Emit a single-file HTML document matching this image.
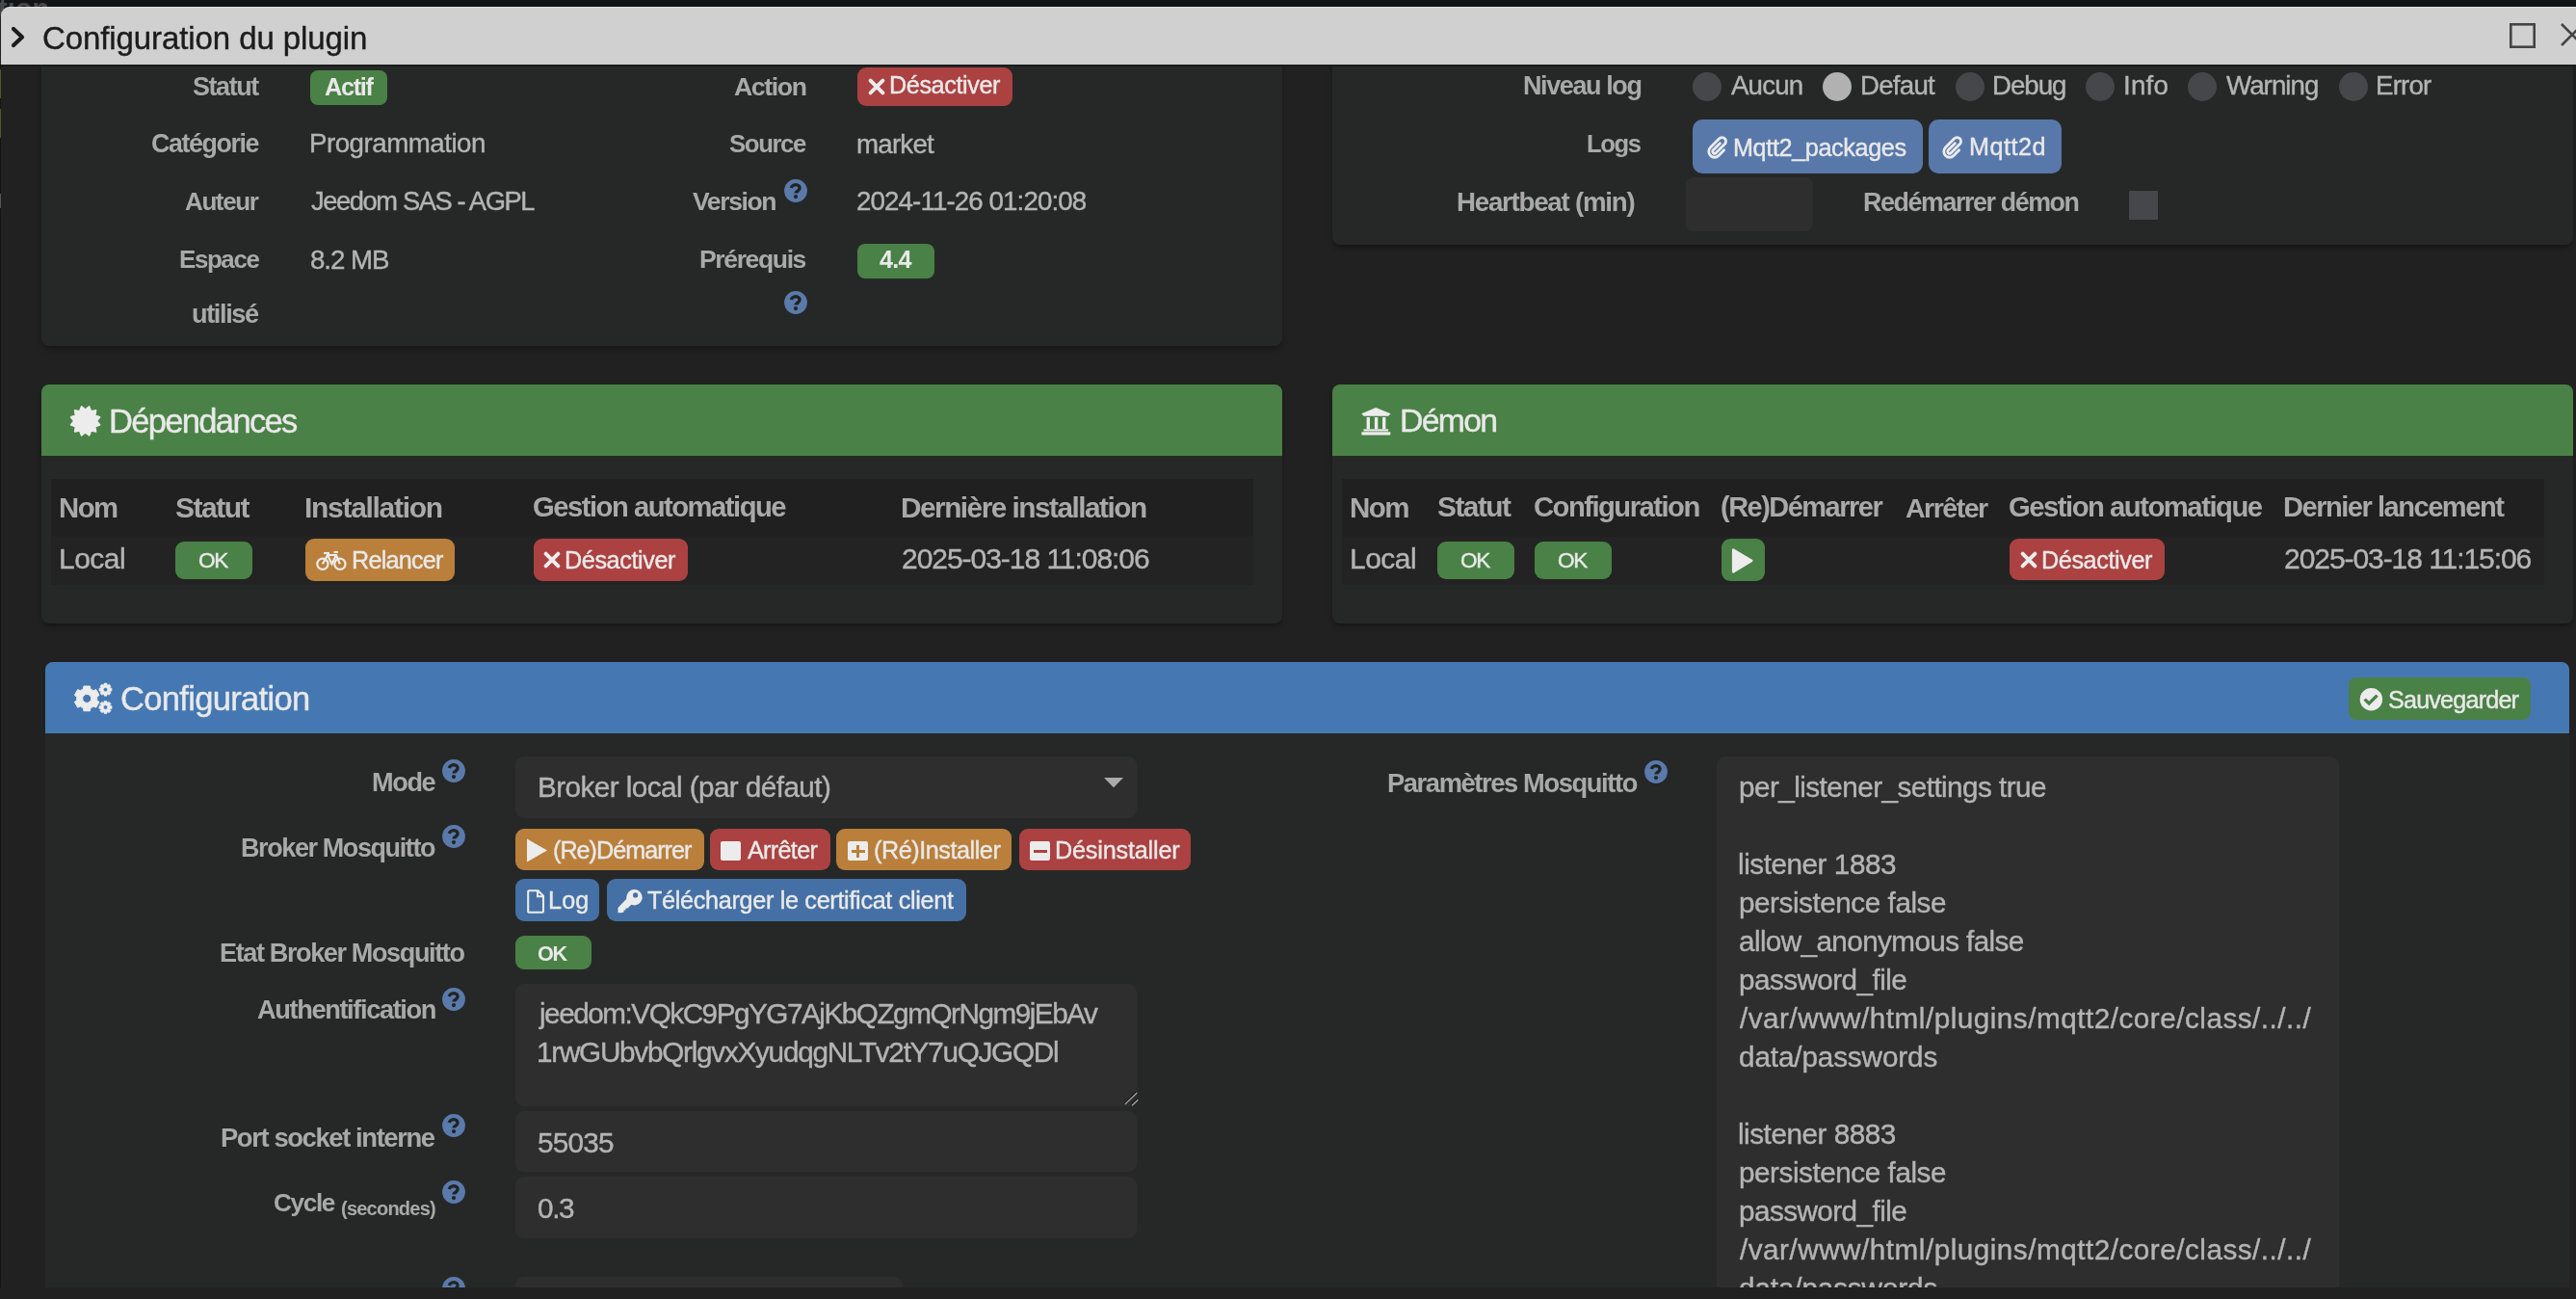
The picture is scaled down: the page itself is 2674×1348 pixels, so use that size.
<!DOCTYPE html>
<html><head><meta charset="utf-8"><style>
html,body{margin:0;padding:0;}
body{width:2674px;height:1348px;overflow:hidden;position:relative;background:#212121;font-family:"Liberation Sans", sans-serif;}
</style></head><body>
<div style="position:absolute;left:0.0px;top:0.0px;width:2674.0px;height:7.0px;background:#131416;border-radius:0px;"></div>
<div id="t0" style="position:absolute;left:-1.75px;top:-5.25px;font-size:29px;line-height:29px;font-weight:700;color:#4a4a4a;will-change:transform;white-space:pre;letter-spacing:0.000px;">tion</div>
<div style="position:absolute;left:1.0px;top:7.0px;width:2673.0px;height:1341.0px;background:#212121;border-radius:9px 0 0 0;"></div>
<div style="position:absolute;left:0.0px;top:67.0px;width:1.0px;height:1281.0px;background:#151515;border-radius:0px;"></div>
<div style="position:absolute;left:0.0px;top:71.5px;width:1.0px;height:30.1px;background:#4d5a22;border-radius:0px;"></div>
<div style="position:absolute;left:0.0px;top:113.0px;width:1.0px;height:30.0px;background:#4d5a22;border-radius:0px;"></div>
<div style="position:absolute;left:0.0px;top:201.0px;width:1.0px;height:15.0px;background:#555;border-radius:0px;"></div>
<div style="position:absolute;left:43.0px;top:40.0px;width:1288.0px;height:318.5px;background:#262827;border-radius:0 0 8px 8px;box-shadow:0 4px 6px -2px rgba(0,0,0,.45);"></div>
<div style="position:absolute;left:1383.0px;top:40.0px;width:1288.0px;height:213.6px;background:#262827;border-radius:0 0 8px 8px;box-shadow:0 4px 6px -2px rgba(0,0,0,.45);"></div>
<div style="position:absolute;left:1.0px;top:7.0px;width:2673.0px;height:60.0px;background:#d0d0d0;border-radius:9px 0 0 0;border-top:1px solid #e0e0e0;box-sizing:border-box;"></div>
<div style="position:absolute;left:1.0px;top:67.0px;width:2673.0px;height:2.0px;background:#1b1c1c;border-radius:0px;"></div>
<svg style="position:absolute;left:10.0px;top:26.0px;" width="18" height="26" viewBox="0 0 18 26"><polyline points="4,4 13,12.5 4,21" fill="none" stroke="#1c1c1c" stroke-width="4.2" stroke-linecap="round" stroke-linejoin="round"/></svg>
<div id="t1" style="position:absolute;left:44.00px;top:23.06px;font-size:33px;line-height:33px;font-weight:400;color:#1c1c1c;-webkit-text-stroke:0.4px currentColor;will-change:transform;white-space:pre;letter-spacing:-0.094px;">Configuration du plugin</div>
<svg style="position:absolute;left:2604.0px;top:23.0px;" width="30" height="28" viewBox="0 0 30 28"><rect x="2.3" y="2.3" width="24.4" height="23.4" fill="none" stroke="#444" stroke-width="2.6"/></svg>
<svg style="position:absolute;left:2655.0px;top:22.0px;" width="22" height="30" viewBox="0 0 22 30"><path d="M4,3 L26,25 M4,25 L26,3" stroke="#444" stroke-width="2.6" fill="none"/></svg>
<div id="t2" style="position:absolute;left:200.00px;top:76.53px;font-size:26.89px;line-height:26.89px;font-weight:700;color:#a9a9a9;will-change:transform;white-space:pre;letter-spacing:-1.385px;">Statut</div>
<div id="t3" style="position:absolute;left:157.03px;top:136.33px;font-size:26.77px;line-height:26.77px;font-weight:700;color:#a9a9a9;will-change:transform;white-space:pre;letter-spacing:-1.385px;">Catégorie</div>
<div id="t4" style="position:absolute;left:192.00px;top:196.39px;font-size:25.99px;line-height:25.99px;font-weight:700;color:#a9a9a9;will-change:transform;white-space:pre;letter-spacing:-1.385px;">Auteur</div>
<div id="t5" style="position:absolute;left:185.56px;top:257.05px;font-size:25.92px;line-height:25.92px;font-weight:700;color:#a9a9a9;will-change:transform;white-space:pre;letter-spacing:-1.385px;">Espace</div>
<div id="t6" style="position:absolute;left:199.32px;top:311.62px;font-size:27.14px;line-height:27.14px;font-weight:700;color:#a9a9a9;will-change:transform;white-space:pre;letter-spacing:-1.385px;">utilisé</div>
<div style="position:absolute;left:322.0px;top:73.0px;width:79.7px;height:35.6px;background:#4a8146;border-radius:8px;"></div>
<div id="t7" style="position:absolute;left:336.50px;top:77.90px;font-size:25.28px;line-height:25.28px;font-weight:700;color:#e9e9e9;will-change:transform;white-space:pre;letter-spacing:-1.300px;">Actif</div>
<div id="t8" style="position:absolute;left:321.40px;top:135.45px;font-size:27.7px;line-height:27.7px;font-weight:400;color:#b4b4b4;-webkit-text-stroke:0.4px currentColor;will-change:transform;white-space:pre;letter-spacing:-0.489px;">Programmation</div>
<div id="t9" style="position:absolute;left:323.00px;top:195.31px;font-size:27.27px;line-height:27.27px;font-weight:400;color:#b4b4b4;-webkit-text-stroke:0.4px currentColor;will-change:transform;white-space:pre;letter-spacing:-1.385px;">Jeedom SAS - AGPL</div>
<div id="t10" style="position:absolute;left:321.60px;top:255.55px;font-size:27.7px;line-height:27.7px;font-weight:400;color:#b4b4b4;-webkit-text-stroke:0.4px currentColor;will-change:transform;white-space:pre;letter-spacing:-1.049px;">8.2 MB</div>
<div id="t11" style="position:absolute;left:762.00px;top:76.75px;font-size:26.63px;line-height:26.63px;font-weight:700;color:#a9a9a9;will-change:transform;white-space:pre;letter-spacing:-1.385px;">Action</div>
<div id="t12" style="position:absolute;left:757.00px;top:137.19px;font-size:25.76px;line-height:25.76px;font-weight:700;color:#a9a9a9;will-change:transform;white-space:pre;letter-spacing:-1.385px;">Source</div>
<div id="t13" style="position:absolute;left:719.40px;top:196.25px;font-size:26.52px;line-height:26.52px;font-weight:700;color:#a9a9a9;will-change:transform;white-space:pre;letter-spacing:-1.385px;">Version</div>
<div id="t14" style="position:absolute;left:726.04px;top:255.82px;font-size:26.55px;line-height:26.55px;font-weight:700;color:#a9a9a9;will-change:transform;white-space:pre;letter-spacing:-1.385px;">Prérequis</div>
<svg style="position:absolute;left:814.0px;top:186.0px;" width="24" height="24" viewBox="0 0 24 24"><circle cx="12" cy="12" r="11.9" fill="#5a7aab"/><path d="M7.2,9.1 C8.3,5.7 12,5.3 13.7,6 C16.7,7.2 16.8,10.4 14.3,12 C12.6,13.1 12,13.4 12,14.6" fill="none" stroke="#222423" stroke-width="3.4" stroke-linecap="butt"/><circle cx="12" cy="18.1" r="2.1" fill="#222423"/></svg>
<svg style="position:absolute;left:814.0px;top:302.0px;" width="24" height="24" viewBox="0 0 24 24"><circle cx="12" cy="12" r="11.9" fill="#5a7aab"/><path d="M7.2,9.1 C8.3,5.7 12,5.3 13.7,6 C16.7,7.2 16.8,10.4 14.3,12 C12.6,13.1 12,13.4 12,14.6" fill="none" stroke="#222423" stroke-width="3.4" stroke-linecap="butt"/><circle cx="12" cy="18.1" r="2.1" fill="#222423"/></svg>
<div style="position:absolute;left:889.7px;top:70.0px;width:161.0px;height:39.5px;background:#ab4141;border-radius:9px;"></div>
<div id="t15" style="position:absolute;left:923.20px;top:76.46px;font-size:25.2px;line-height:25.2px;font-weight:400;color:#e9e9e9;-webkit-text-stroke:0.4px currentColor;will-change:transform;white-space:pre;letter-spacing:-0.399px;">Désactiver</div>
<div id="t16" style="position:absolute;left:889.20px;top:135.55px;font-size:27.7px;line-height:27.7px;font-weight:400;color:#b4b4b4;-webkit-text-stroke:0.4px currentColor;will-change:transform;white-space:pre;letter-spacing:-0.785px;">market</div>
<div id="t17" style="position:absolute;left:888.70px;top:195.25px;font-size:27.7px;line-height:27.7px;font-weight:400;color:#b4b4b4;-webkit-text-stroke:0.4px currentColor;will-change:transform;white-space:pre;letter-spacing:-0.880px;">2024-11-26 01:20:08</div>
<div style="position:absolute;left:890.0px;top:253.0px;width:79.7px;height:35.5px;background:#4a8146;border-radius:8px;"></div>
<div id="t18" style="position:absolute;left:913.00px;top:256.96px;font-size:25.2px;line-height:25.2px;font-weight:700;color:#e9e9e9;will-change:transform;white-space:pre;letter-spacing:-0.803px;">4.4</div>
<div id="t19" style="position:absolute;left:1581.23px;top:75.86px;font-size:26.97px;line-height:26.97px;font-weight:700;color:#a9a9a9;will-change:transform;white-space:pre;letter-spacing:-1.385px;">Niveau log</div>
<div id="t20" style="position:absolute;left:1647.48px;top:137.35px;font-size:25.57px;line-height:25.57px;font-weight:700;color:#a9a9a9;will-change:transform;white-space:pre;letter-spacing:-1.385px;">Logs</div>
<div id="t21" style="position:absolute;left:1511.60px;top:196.05px;font-size:27.7px;line-height:27.7px;font-weight:700;color:#a9a9a9;will-change:transform;white-space:pre;letter-spacing:-1.247px;">Heartbeat (min)</div>
<div style="position:absolute;left:1757.0px;top:75.0px;width:30.0px;height:30.0px;background:#46474a;border-radius:15px;"></div>
<div id="t22" style="position:absolute;left:1797.00px;top:75.25px;font-size:27.7px;line-height:27.7px;font-weight:400;color:#b4b4b4;-webkit-text-stroke:0.4px currentColor;will-change:transform;white-space:pre;letter-spacing:-0.852px;">Aucun</div>
<div style="position:absolute;left:1892.0px;top:75.0px;width:30.0px;height:30.0px;background:#b1b1b1;border-radius:15px;"></div>
<div id="t23" style="position:absolute;left:1930.50px;top:75.25px;font-size:27.7px;line-height:27.7px;font-weight:400;color:#b4b4b4;-webkit-text-stroke:0.4px currentColor;will-change:transform;white-space:pre;letter-spacing:-0.777px;">Defaut</div>
<div style="position:absolute;left:2030.0px;top:75.0px;width:30.0px;height:30.0px;background:#46474a;border-radius:15px;"></div>
<div id="t24" style="position:absolute;left:2068.00px;top:75.25px;font-size:27.7px;line-height:27.7px;font-weight:400;color:#b4b4b4;-webkit-text-stroke:0.4px currentColor;will-change:transform;white-space:pre;letter-spacing:-1.048px;">Debug</div>
<div style="position:absolute;left:2165.0px;top:75.0px;width:30.0px;height:30.0px;background:#46474a;border-radius:15px;"></div>
<div id="t25" style="position:absolute;left:2204.00px;top:75.25px;font-size:27.7px;line-height:27.7px;font-weight:400;color:#b4b4b4;-webkit-text-stroke:0.4px currentColor;will-change:transform;white-space:pre;letter-spacing:0.206px;">Info</div>
<div style="position:absolute;left:2271.0px;top:75.0px;width:30.0px;height:30.0px;background:#46474a;border-radius:15px;"></div>
<div id="t26" style="position:absolute;left:2311.00px;top:75.25px;font-size:27.7px;line-height:27.7px;font-weight:400;color:#b4b4b4;-webkit-text-stroke:0.4px currentColor;will-change:transform;white-space:pre;letter-spacing:-0.945px;">Warning</div>
<div style="position:absolute;left:2428.0px;top:75.0px;width:30.0px;height:30.0px;background:#46474a;border-radius:15px;"></div>
<div id="t27" style="position:absolute;left:2466.00px;top:75.25px;font-size:27.7px;line-height:27.7px;font-weight:400;color:#b4b4b4;-webkit-text-stroke:0.4px currentColor;will-change:transform;white-space:pre;letter-spacing:-0.827px;">Error</div>
<div style="position:absolute;left:1757.0px;top:124.0px;width:239.0px;height:56.0px;background:#5878aa;border-radius:10px;"></div>
<div style="position:absolute;left:2002.0px;top:124.0px;width:138.0px;height:56.0px;background:#5878aa;border-radius:10px;"></div>
<div id="t28" style="position:absolute;left:1798.90px;top:140.56px;font-size:25.2px;line-height:25.2px;font-weight:400;color:#e9e9e9;-webkit-text-stroke:0.4px currentColor;will-change:transform;white-space:pre;letter-spacing:-0.364px;">Mqtt2_packages</div>
<div id="t29" style="position:absolute;left:2043.80px;top:140.16px;font-size:25.2px;line-height:25.2px;font-weight:400;color:#e9e9e9;-webkit-text-stroke:0.4px currentColor;will-change:transform;white-space:pre;letter-spacing:0.521px;">Mqtt2d</div>
<div style="position:absolute;left:1750.0px;top:183.7px;width:131.5px;height:55.9px;background:#2e2e2e;border-radius:8px;"></div>
<div id="t30" style="position:absolute;left:1933.83px;top:196.81px;font-size:26.8px;line-height:26.8px;font-weight:700;color:#a9a9a9;will-change:transform;white-space:pre;letter-spacing:-1.385px;">Redémarrer démon</div>
<div style="position:absolute;left:2210.0px;top:198.0px;width:30.0px;height:29.7px;background:#46474a;border-radius:1px;"></div>
<div style="position:absolute;left:43.0px;top:399.0px;width:1287.6px;height:247.8px;background:#262827;border-radius:8px;box-shadow:0 4px 6px -2px rgba(0,0,0,.45);"></div>
<div style="position:absolute;left:43.0px;top:399.0px;width:1287.6px;height:74.0px;background:#4a8146;border-radius:8px 8px 0 0;"></div>
<div id="t31" style="position:absolute;left:112.50px;top:419.69px;font-size:34.5px;line-height:34.5px;font-weight:400;color:#e9e9e9;-webkit-text-stroke:0.4px currentColor;will-change:transform;white-space:pre;letter-spacing:-1.666px;">Dépendances</div>
<div style="position:absolute;left:53.0px;top:497.0px;width:1247.7px;height:109.5px;background:#202020;border-radius:0px;"></div>
<div style="position:absolute;left:53.0px;top:557.0px;width:1247.7px;height:49.5px;background:#232323;border-radius:0px;"></div>
<div id="t32" style="position:absolute;left:61.05px;top:512.20px;font-size:29.29px;line-height:29.29px;font-weight:700;color:#a9a9a9;will-change:transform;white-space:pre;letter-spacing:-1.500px;">Nom</div>
<div id="t33" style="position:absolute;left:182.00px;top:511.60px;font-size:30px;line-height:30px;font-weight:700;color:#a9a9a9;will-change:transform;white-space:pre;letter-spacing:-1.500px;">Statut</div>
<div id="t34" style="position:absolute;left:316.00px;top:511.60px;font-size:30px;line-height:30px;font-weight:700;color:#a9a9a9;will-change:transform;white-space:pre;letter-spacing:-1.302px;">Installation</div>
<div id="t35" style="position:absolute;left:553.33px;top:512.26px;font-size:29.22px;line-height:29.22px;font-weight:700;color:#a9a9a9;will-change:transform;white-space:pre;letter-spacing:-1.500px;">Gestion automatique</div>
<div id="t36" style="position:absolute;left:934.81px;top:511.79px;font-size:29.78px;line-height:29.78px;font-weight:700;color:#a9a9a9;will-change:transform;white-space:pre;letter-spacing:-1.500px;">Dernière installation</div>
<div id="t37" style="position:absolute;left:61.00px;top:565.10px;font-size:30px;line-height:30px;font-weight:400;color:#b4b4b4;-webkit-text-stroke:0.4px currentColor;will-change:transform;white-space:pre;letter-spacing:-0.513px;">Local</div>
<div style="position:absolute;left:182.0px;top:561.5px;width:79.7px;height:39.5px;background:#4a8146;border-radius:9px;"></div>
<div id="t38" style="position:absolute;left:205.54px;top:571.40px;font-size:22.56px;line-height:22.56px;font-weight:400;color:#e9e9e9;-webkit-text-stroke:0.4px currentColor;will-change:transform;white-space:pre;letter-spacing:-1.180px;">OK</div>
<div style="position:absolute;left:317.0px;top:559.3px;width:155.0px;height:43.5px;background:#b97f3b;border-radius:9px;"></div>
<div id="t39" style="position:absolute;left:364.90px;top:569.46px;font-size:25.2px;line-height:25.2px;font-weight:400;color:#e9e9e9;-webkit-text-stroke:0.4px currentColor;will-change:transform;white-space:pre;letter-spacing:-0.773px;">Relancer</div>
<div style="position:absolute;left:553.8px;top:559.3px;width:160.2px;height:43.5px;background:#ab4141;border-radius:9px;"></div>
<div id="t40" style="position:absolute;left:586.00px;top:569.46px;font-size:25.2px;line-height:25.2px;font-weight:400;color:#e9e9e9;-webkit-text-stroke:0.4px currentColor;will-change:transform;white-space:pre;letter-spacing:-0.399px;">Désactiver</div>
<div id="t41" style="position:absolute;left:935.80px;top:564.60px;font-size:30px;line-height:30px;font-weight:400;color:#b4b4b4;-webkit-text-stroke:0.4px currentColor;will-change:transform;white-space:pre;letter-spacing:-1.037px;">2025-03-18 11:08:06</div>
<div style="position:absolute;left:1383.0px;top:399.0px;width:1288.0px;height:247.8px;background:#262827;border-radius:8px;box-shadow:0 4px 6px -2px rgba(0,0,0,.45);"></div>
<div style="position:absolute;left:1383.0px;top:399.0px;width:1288.0px;height:74.0px;background:#4a8146;border-radius:8px 8px 0 0;"></div>
<div id="t42" style="position:absolute;left:1453.04px;top:420.17px;font-size:33.81px;line-height:33.81px;font-weight:400;color:#e9e9e9;-webkit-text-stroke:0.4px currentColor;will-change:transform;white-space:pre;letter-spacing:-1.725px;">Démon</div>
<div style="position:absolute;left:1393.0px;top:497.0px;width:1248.0px;height:109.5px;background:#202020;border-radius:0px;"></div>
<div style="position:absolute;left:1393.0px;top:557.0px;width:1248.0px;height:49.5px;background:#232323;border-radius:0px;"></div>
<div id="t43" style="position:absolute;left:1401.03px;top:511.70px;font-size:29.53px;line-height:29.53px;font-weight:700;color:#a9a9a9;will-change:transform;white-space:pre;letter-spacing:-1.500px;">Nom</div>
<div id="t44" style="position:absolute;left:1492.40px;top:511.45px;font-size:29.82px;line-height:29.82px;font-weight:700;color:#a9a9a9;will-change:transform;white-space:pre;letter-spacing:-1.500px;">Statut</div>
<div id="t45" style="position:absolute;left:1592.03px;top:511.99px;font-size:29.18px;line-height:29.18px;font-weight:700;color:#a9a9a9;will-change:transform;white-space:pre;letter-spacing:-1.500px;">Configuration</div>
<div id="t46" style="position:absolute;left:1786.03px;top:512.17px;font-size:28.97px;line-height:28.97px;font-weight:700;color:#a9a9a9;will-change:transform;white-space:pre;letter-spacing:-1.500px;">(Re)Démarrer</div>
<div id="t47" style="position:absolute;left:1977.80px;top:512.54px;font-size:28.54px;line-height:28.54px;font-weight:700;color:#a9a9a9;will-change:transform;white-space:pre;letter-spacing:-1.500px;">Arrêter</div>
<div id="t48" style="position:absolute;left:2084.92px;top:511.92px;font-size:29.27px;line-height:29.27px;font-weight:700;color:#a9a9a9;will-change:transform;white-space:pre;letter-spacing:-1.500px;">Gestion automatique</div>
<div id="t49" style="position:absolute;left:2370.26px;top:512.06px;font-size:29.1px;line-height:29.1px;font-weight:700;color:#a9a9a9;will-change:transform;white-space:pre;letter-spacing:-1.500px;">Dernier lancement</div>
<div id="t50" style="position:absolute;left:1401.00px;top:565.10px;font-size:30px;line-height:30px;font-weight:400;color:#b4b4b4;-webkit-text-stroke:0.4px currentColor;will-change:transform;white-space:pre;letter-spacing:-0.513px;">Local</div>
<div style="position:absolute;left:1492.0px;top:561.5px;width:80.0px;height:39.5px;background:#4a8146;border-radius:9px;"></div>
<div id="t51" style="position:absolute;left:1515.54px;top:571.40px;font-size:22.56px;line-height:22.56px;font-weight:400;color:#e9e9e9;-webkit-text-stroke:0.4px currentColor;will-change:transform;white-space:pre;letter-spacing:-1.180px;">OK</div>
<div style="position:absolute;left:1593.0px;top:561.5px;width:80.0px;height:39.5px;background:#4a8146;border-radius:9px;"></div>
<div id="t52" style="position:absolute;left:1616.54px;top:571.40px;font-size:22.56px;line-height:22.56px;font-weight:400;color:#e9e9e9;-webkit-text-stroke:0.4px currentColor;will-change:transform;white-space:pre;letter-spacing:-1.180px;">OK</div>
<div style="position:absolute;left:1787.0px;top:559.0px;width:45.0px;height:44.0px;background:#4a8146;border-radius:9px;"></div>
<div style="position:absolute;left:2086.0px;top:559.0px;width:160.7px;height:43.4px;background:#ab4141;border-radius:9px;"></div>
<div id="t53" style="position:absolute;left:2118.70px;top:569.46px;font-size:25.2px;line-height:25.2px;font-weight:400;color:#e9e9e9;-webkit-text-stroke:0.4px currentColor;will-change:transform;white-space:pre;letter-spacing:-0.399px;">Désactiver</div>
<div id="t54" style="position:absolute;left:2371.20px;top:564.60px;font-size:30px;line-height:30px;font-weight:400;color:#b4b4b4;-webkit-text-stroke:0.4px currentColor;will-change:transform;white-space:pre;letter-spacing:-1.059px;">2025-03-18 11:15:06</div>
<div style="position:absolute;left:47.0px;top:687.0px;width:2620.0px;height:649.0px;background:#262827;border-radius:8px 8px 0 0;"></div>
<div style="position:absolute;left:47.0px;top:687.0px;width:2620.0px;height:73.5px;background:#4578b2;border-radius:8px 8px 0 0;"></div>
<div id="t55" style="position:absolute;left:125.00px;top:708.09px;font-size:34.5px;line-height:34.5px;font-weight:400;color:#e9e9e9;-webkit-text-stroke:0.4px currentColor;will-change:transform;white-space:pre;letter-spacing:-0.669px;">Configuration</div>
<div style="position:absolute;left:2437.9px;top:703.0px;width:189.1px;height:43.9px;background:#4a8146;border-radius:8px;"></div>
<div id="t56" style="position:absolute;left:2479.00px;top:713.66px;font-size:25.2px;line-height:25.2px;font-weight:400;color:#e9e9e9;-webkit-text-stroke:0.4px currentColor;will-change:transform;white-space:pre;letter-spacing:-0.824px;">Sauvegarder</div>
<div id="t57" style="position:absolute;left:385.72px;top:798.02px;font-size:27.14px;line-height:27.14px;font-weight:700;color:#a9a9a9;will-change:transform;white-space:pre;letter-spacing:-1.385px;">Mode</div>
<svg style="position:absolute;left:459.0px;top:788.0px;" width="24" height="24" viewBox="0 0 24 24"><circle cx="12" cy="12" r="11.9" fill="#5a7aab"/><path d="M7.2,9.1 C8.3,5.7 12,5.3 13.7,6 C16.7,7.2 16.8,10.4 14.3,12 C12.6,13.1 12,13.4 12,14.6" fill="none" stroke="#222423" stroke-width="3.4" stroke-linecap="butt"/><circle cx="12" cy="18.1" r="2.1" fill="#222423"/></svg>
<div id="t58" style="position:absolute;left:250.43px;top:866.76px;font-size:26.98px;line-height:26.98px;font-weight:700;color:#a9a9a9;will-change:transform;white-space:pre;letter-spacing:-1.385px;">Broker Mosquitto</div>
<svg style="position:absolute;left:459.0px;top:856.0px;" width="24" height="24" viewBox="0 0 24 24"><circle cx="12" cy="12" r="11.9" fill="#5a7aab"/><path d="M7.2,9.1 C8.3,5.7 12,5.3 13.7,6 C16.7,7.2 16.8,10.4 14.3,12 C12.6,13.1 12,13.4 12,14.6" fill="none" stroke="#222423" stroke-width="3.4" stroke-linecap="butt"/><circle cx="12" cy="18.1" r="2.1" fill="#222423"/></svg>
<div id="t59" style="position:absolute;left:266.60px;top:1034.25px;font-size:27.22px;line-height:27.22px;font-weight:700;color:#a9a9a9;will-change:transform;white-space:pre;letter-spacing:-1.385px;">Authentification</div>
<svg style="position:absolute;left:459.0px;top:1025.0px;" width="24" height="24" viewBox="0 0 24 24"><circle cx="12" cy="12" r="11.9" fill="#5a7aab"/><path d="M7.2,9.1 C8.3,5.7 12,5.3 13.7,6 C16.7,7.2 16.8,10.4 14.3,12 C12.6,13.1 12,13.4 12,14.6" fill="none" stroke="#222423" stroke-width="3.4" stroke-linecap="butt"/><circle cx="12" cy="18.1" r="2.1" fill="#222423"/></svg>
<div id="t60" style="position:absolute;left:229.31px;top:1166.51px;font-size:27.39px;line-height:27.39px;font-weight:700;color:#a9a9a9;will-change:transform;white-space:pre;letter-spacing:-1.385px;">Port socket interne</div>
<svg style="position:absolute;left:459.0px;top:1156.4px;" width="24" height="24" viewBox="0 0 24 24"><circle cx="12" cy="12" r="11.9" fill="#5a7aab"/><path d="M7.2,9.1 C8.3,5.7 12,5.3 13.7,6 C16.7,7.2 16.8,10.4 14.3,12 C12.6,13.1 12,13.4 12,14.6" fill="none" stroke="#222423" stroke-width="3.4" stroke-linecap="butt"/><circle cx="12" cy="18.1" r="2.1" fill="#222423"/></svg>
<div id="t61" style="position:absolute;left:228.02px;top:974.68px;font-size:27.07px;line-height:27.07px;font-weight:700;color:#a9a9a9;will-change:transform;white-space:pre;letter-spacing:-1.385px;">Etat Broker Mosquitto</div>
<div id="t62" style="position:absolute;left:283.55px;top:1235.42px;font-size:26.19px;line-height:26.19px;font-weight:700;color:#a9a9a9;will-change:transform;white-space:pre;letter-spacing:-1.385px;">Cycle</div>
<div id="t63" style="position:absolute;left:354.00px;top:1244.07px;font-size:20px;line-height:20px;font-weight:700;color:#a9a9a9;will-change:transform;white-space:pre;letter-spacing:-0.770px;">(secondes)</div>
<svg style="position:absolute;left:459.0px;top:1224.7px;" width="24" height="24" viewBox="0 0 24 24"><circle cx="12" cy="12" r="11.9" fill="#5a7aab"/><path d="M7.2,9.1 C8.3,5.7 12,5.3 13.7,6 C16.7,7.2 16.8,10.4 14.3,12 C12.6,13.1 12,13.4 12,14.6" fill="none" stroke="#222423" stroke-width="3.4" stroke-linecap="butt"/><circle cx="12" cy="18.1" r="2.1" fill="#222423"/></svg>
<svg style="position:absolute;left:459.0px;top:1325.0px;" width="24" height="24" viewBox="0 0 24 24"><circle cx="12" cy="12" r="11.9" fill="#5a7aab"/><path d="M7.2,9.1 C8.3,5.7 12,5.3 13.7,6 C16.7,7.2 16.8,10.4 14.3,12 C12.6,13.1 12,13.4 12,14.6" fill="none" stroke="#222423" stroke-width="3.4" stroke-linecap="butt"/><circle cx="12" cy="18.1" r="2.1" fill="#222423"/></svg>
<div style="position:absolute;left:535.0px;top:784.7px;width:645.0px;height:64.1px;background:#2e2e2e;border-radius:9px;"></div>
<div id="t64" style="position:absolute;left:557.70px;top:802.35px;font-size:29.7px;line-height:29.7px;font-weight:400;color:#b4b4b4;-webkit-text-stroke:0.4px currentColor;will-change:transform;white-space:pre;letter-spacing:-0.566px;">Broker local (par défaut)</div>
<svg style="position:absolute;left:1146.0px;top:807.0px;" width="20" height="11" viewBox="0 0 20 11"><polygon points="0,0 20,0 10,10.3" fill="#aaa"/></svg>
<div style="position:absolute;left:535.0px;top:860.4px;width:195.6px;height:43.1px;background:#b97f3b;border-radius:9px;"></div>
<div id="t65" style="position:absolute;left:573.80px;top:869.66px;font-size:25.2px;line-height:25.2px;font-weight:400;color:#e9e9e9;-webkit-text-stroke:0.4px currentColor;will-change:transform;white-space:pre;letter-spacing:-0.995px;">(Re)Démarrer</div>
<div style="position:absolute;left:737.0px;top:860.4px;width:124.6px;height:43.1px;background:#ab4141;border-radius:9px;"></div>
<div id="t66" style="position:absolute;left:776.00px;top:869.66px;font-size:25.2px;line-height:25.2px;font-weight:400;color:#e9e9e9;-webkit-text-stroke:0.4px currentColor;will-change:transform;white-space:pre;letter-spacing:-0.682px;">Arrêter</div>
<div style="position:absolute;left:868.0px;top:860.4px;width:182.0px;height:43.1px;background:#b97f3b;border-radius:9px;"></div>
<div id="t67" style="position:absolute;left:906.60px;top:869.66px;font-size:25.2px;line-height:25.2px;font-weight:400;color:#e9e9e9;-webkit-text-stroke:0.4px currentColor;will-change:transform;white-space:pre;letter-spacing:-0.448px;">(Ré)Installer</div>
<div style="position:absolute;left:1058.0px;top:860.4px;width:177.7px;height:43.1px;background:#ab4141;border-radius:9px;"></div>
<div id="t68" style="position:absolute;left:1094.80px;top:869.66px;font-size:25.2px;line-height:25.2px;font-weight:400;color:#e9e9e9;-webkit-text-stroke:0.4px currentColor;will-change:transform;white-space:pre;letter-spacing:-0.181px;">Désinstaller</div>
<svg style="position:absolute;left:546.0px;top:870.0px;" width="24" height="26" viewBox="0 0 24 26"><polygon points="1,0.5 22,12.5 1,24.5" fill="#ececec"/></svg>
<div style="position:absolute;left:748.3px;top:873.0px;width:21.0px;height:20.3px;background:#ececec;border-radius:2px;"></div>
<div style="position:absolute;left:880.0px;top:873.0px;width:21.0px;height:20.3px;background:#ececec;border-radius:2px;"></div>
<div style="position:absolute;left:1069.0px;top:873.0px;width:21.4px;height:20.3px;background:#ececec;border-radius:2px;"></div>
<div style="position:absolute;left:889.0px;top:876.5px;width:3.0px;height:13.3px;background:#b97f3b;border-radius:0px;"></div>
<div style="position:absolute;left:883.5px;top:881.6px;width:14.0px;height:3.0px;background:#b97f3b;border-radius:0px;"></div>
<div style="position:absolute;left:1072.5px;top:881.6px;width:14.4px;height:3.0px;background:#ab4141;border-radius:0px;"></div>
<div style="position:absolute;left:535.0px;top:912.0px;width:87.3px;height:43.6px;background:#4470a5;border-radius:9px;"></div>
<div id="t69" style="position:absolute;left:569.30px;top:922.06px;font-size:25.2px;line-height:25.2px;font-weight:400;color:#e9e9e9;-webkit-text-stroke:0.4px currentColor;will-change:transform;white-space:pre;letter-spacing:0.142px;">Log</div>
<div style="position:absolute;left:630.0px;top:912.0px;width:372.8px;height:43.6px;background:#4470a5;border-radius:9px;"></div>
<div id="t70" style="position:absolute;left:671.80px;top:922.06px;font-size:25.2px;line-height:25.2px;font-weight:400;color:#e9e9e9;-webkit-text-stroke:0.4px currentColor;will-change:transform;white-space:pre;letter-spacing:-0.309px;">Télécharger le certificat client</div>
<div style="position:absolute;left:535.0px;top:970.7px;width:79.4px;height:35.3px;background:#4a8146;border-radius:9px;"></div>
<div id="t71" style="position:absolute;left:558.15px;top:979.26px;font-size:21.66px;line-height:21.66px;font-weight:700;color:#e9e9e9;will-change:transform;white-space:pre;letter-spacing:-1.280px;">OK</div>
<div style="position:absolute;left:535.0px;top:1021.0px;width:645.0px;height:127.0px;background:#2e2e2e;border-radius:9px;"></div>
<div id="t72" style="position:absolute;left:560.00px;top:1037.35px;font-size:29.7px;line-height:29.7px;font-weight:400;color:#b4b4b4;-webkit-text-stroke:0.4px currentColor;will-change:transform;white-space:pre;letter-spacing:-1.472px;">jeedom:VQkC9PgYG7AjKbQZgmQrNgm9jEbAv</div>
<div id="t73" style="position:absolute;left:557.00px;top:1076.85px;font-size:29.7px;line-height:29.7px;font-weight:400;color:#b4b4b4;-webkit-text-stroke:0.4px currentColor;will-change:transform;white-space:pre;letter-spacing:-1.252px;">1rwGUbvbQrlgvxXyudqgNLTv2tY7uQJGQDl</div>
<div style="position:absolute;left:535.0px;top:1153.0px;width:645.0px;height:63.0px;background:#2e2e2e;border-radius:9px;"></div>
<div id="t74" style="position:absolute;left:558.00px;top:1170.55px;font-size:29.7px;line-height:29.7px;font-weight:400;color:#b4b4b4;-webkit-text-stroke:0.4px currentColor;will-change:transform;white-space:pre;letter-spacing:-0.761px;">55035</div>
<div style="position:absolute;left:535.0px;top:1221.0px;width:645.0px;height:63.5px;background:#2e2e2e;border-radius:9px;"></div>
<div id="t75" style="position:absolute;left:558.00px;top:1238.85px;font-size:29.7px;line-height:29.7px;font-weight:400;color:#b4b4b4;-webkit-text-stroke:0.4px currentColor;will-change:transform;white-space:pre;letter-spacing:-1.379px;">0.3</div>
<div style="position:absolute;left:535.0px;top:1325.0px;width:402.0px;height:35.0px;background:#2e2e2e;border-radius:9px;"></div>
<div id="t76" style="position:absolute;left:1439.61px;top:798.89px;font-size:27.3px;line-height:27.3px;font-weight:700;color:#a9a9a9;will-change:transform;white-space:pre;letter-spacing:-1.385px;">Paramètres Mosquitto</div>
<svg style="position:absolute;left:1706.6px;top:788.8px;" width="24" height="24" viewBox="0 0 24 24"><circle cx="12" cy="12" r="11.9" fill="#5a7aab"/><path d="M7.2,9.1 C8.3,5.7 12,5.3 13.7,6 C16.7,7.2 16.8,10.4 14.3,12 C12.6,13.1 12,13.4 12,14.6" fill="none" stroke="#222423" stroke-width="3.4" stroke-linecap="butt"/><circle cx="12" cy="18.1" r="2.1" fill="#222423"/></svg>
<div style="position:absolute;left:1782.0px;top:784.8px;width:646.0px;height:615.2px;background:#2e2e2e;border-radius:9px;"></div>
<div id="t77" style="position:absolute;left:1805.30px;top:801.85px;font-size:29.7px;line-height:29.7px;font-weight:400;color:#b4b4b4;-webkit-text-stroke:0.4px currentColor;will-change:transform;white-space:pre;letter-spacing:-0.553px;">per_listener_settings true</div>
<div id="t78" style="position:absolute;left:1804.30px;top:881.85px;font-size:29.7px;line-height:29.7px;font-weight:400;color:#b4b4b4;-webkit-text-stroke:0.4px currentColor;will-change:transform;white-space:pre;letter-spacing:-0.457px;">listener 1883</div>
<div id="t79" style="position:absolute;left:1805.30px;top:921.85px;font-size:29.7px;line-height:29.7px;font-weight:400;color:#b4b4b4;-webkit-text-stroke:0.4px currentColor;will-change:transform;white-space:pre;letter-spacing:-0.454px;">persistence false</div>
<div id="t80" style="position:absolute;left:1805.30px;top:961.85px;font-size:29.7px;line-height:29.7px;font-weight:400;color:#b4b4b4;-webkit-text-stroke:0.4px currentColor;will-change:transform;white-space:pre;letter-spacing:-0.615px;">allow_anonymous false</div>
<div id="t81" style="position:absolute;left:1805.30px;top:1001.85px;font-size:29.7px;line-height:29.7px;font-weight:400;color:#b4b4b4;-webkit-text-stroke:0.4px currentColor;will-change:transform;white-space:pre;letter-spacing:-0.567px;">password_file</div>
<div id="t82" style="position:absolute;left:1806.30px;top:1041.85px;font-size:29.7px;line-height:29.7px;font-weight:400;color:#b4b4b4;-webkit-text-stroke:0.4px currentColor;will-change:transform;white-space:pre;letter-spacing:0.500px;">/var/www/html/plugins/mqtt2/core/class/../../</div>
<div id="t83" style="position:absolute;left:1805.30px;top:1081.85px;font-size:29.7px;line-height:29.7px;font-weight:400;color:#b4b4b4;-webkit-text-stroke:0.4px currentColor;will-change:transform;white-space:pre;letter-spacing:-0.130px;">data/passwords</div>
<div id="t84" style="position:absolute;left:1804.30px;top:1161.85px;font-size:29.7px;line-height:29.7px;font-weight:400;color:#b4b4b4;-webkit-text-stroke:0.4px currentColor;will-change:transform;white-space:pre;letter-spacing:-0.474px;">listener 8883</div>
<div id="t85" style="position:absolute;left:1805.30px;top:1201.85px;font-size:29.7px;line-height:29.7px;font-weight:400;color:#b4b4b4;-webkit-text-stroke:0.4px currentColor;will-change:transform;white-space:pre;letter-spacing:-0.454px;">persistence false</div>
<div id="t86" style="position:absolute;left:1805.30px;top:1241.85px;font-size:29.7px;line-height:29.7px;font-weight:400;color:#b4b4b4;-webkit-text-stroke:0.4px currentColor;will-change:transform;white-space:pre;letter-spacing:-0.567px;">password_file</div>
<div id="t87" style="position:absolute;left:1806.30px;top:1281.85px;font-size:29.7px;line-height:29.7px;font-weight:400;color:#b4b4b4;-webkit-text-stroke:0.4px currentColor;will-change:transform;white-space:pre;letter-spacing:0.500px;">/var/www/html/plugins/mqtt2/core/class/../../</div>
<div id="t88" style="position:absolute;left:1805.30px;top:1321.85px;font-size:29.7px;line-height:29.7px;font-weight:400;color:#b4b4b4;-webkit-text-stroke:0.4px currentColor;will-change:transform;white-space:pre;letter-spacing:-0.130px;">data/passwords</div>
<svg style="position:absolute;left:70.0px;top:418.0px;" width="37" height="37" viewBox="0 0 37 37"><polygon points="22.59,4.02 24.40,8.85 29.49,8.01 28.65,13.10 33.48,14.91 30.20,18.90 33.48,22.89 28.65,24.70 29.49,29.79 24.40,28.95 22.59,33.78 18.60,30.50 14.61,33.78 12.80,28.95 7.71,29.79 8.55,24.70 3.72,22.89 7.00,18.90 3.72,14.91 8.55,13.10 7.71,8.01 12.80,8.85 14.61,4.02 18.60,7.30" fill="#ececec" stroke="#ececec" stroke-width="1.8" stroke-linejoin="round"/></svg>
<svg style="position:absolute;left:1413.0px;top:422.5px;" width="31" height="29" viewBox="0 0 31 29"><g fill="#ececec"><polygon points="15.2,0 0.3,6.3 2.6,8.8 28.1,8.8 30.6,6.3"/><rect x="5.6" y="10" width="3.4" height="12.2"/><rect x="13.9" y="10" width="3.4" height="12.2"/><rect x="22" y="10" width="3.4" height="12.2"/><rect x="2.5" y="22.3" width="25.6" height="2.2"/><rect x="0.3" y="25.2" width="30.1" height="3.2" rx="0.8"/></g></svg>
<svg style="position:absolute;left:74.0px;top:700.0px;" width="46" height="50" viewBox="0 0 46 50"><path fill-rule="evenodd" fill="#ececec" stroke="#ececec" stroke-width="1" stroke-linejoin="round" d="M12.51,14.96 L12.89,12.02 L19.51,12.02 L19.89,14.96 L20.44,15.19 L20.98,15.44 L21.50,15.72 L22.00,16.03 L22.49,16.37 L22.96,16.73 L25.70,15.59 L29.01,21.32 L26.65,23.13 L26.73,23.72 L26.78,24.31 L26.80,24.90 L26.78,25.49 L26.73,26.08 L26.65,26.67 L29.01,28.48 L25.70,34.21 L22.96,33.07 L22.49,33.43 L22.00,33.77 L21.50,34.08 L20.98,34.36 L20.44,34.61 L19.89,34.84 L19.51,37.78 L12.89,37.78 L12.51,34.84 L11.96,34.61 L11.42,34.36 L10.90,34.08 L10.40,33.77 L9.91,33.43 L9.44,33.07 L6.70,34.21 L3.39,28.48 L5.75,26.67 L5.67,26.08 L5.62,25.49 L5.60,24.90 L5.62,24.31 L5.67,23.72 L5.75,23.13 L3.39,21.32 L6.70,15.59 L9.44,16.73 L9.91,16.37 L10.40,16.03 L10.90,15.72 L11.42,15.44 L11.96,15.19 Z M20.7,24.9 A4.5,4.5 0 1 0 11.7,24.9 A4.5,4.5 0 1 0 20.7,24.9 Z"/><path fill-rule="evenodd" fill="#ececec" stroke="#ececec" stroke-width="0.6" stroke-linejoin="round" d="M33.94,10.53 L34.04,9.06 L36.96,9.06 L37.06,10.53 L37.22,10.59 L37.37,10.64 L37.53,10.70 L37.68,10.77 L37.83,10.84 L37.98,10.92 L39.09,9.94 L41.16,12.01 L40.18,13.12 L40.26,13.27 L40.33,13.42 L40.40,13.57 L40.46,13.73 L40.51,13.88 L40.57,14.04 L42.04,14.14 L42.04,17.06 L40.57,17.16 L40.51,17.32 L40.46,17.47 L40.40,17.63 L40.33,17.78 L40.26,17.93 L40.18,18.08 L41.16,19.19 L39.09,21.26 L37.98,20.28 L37.83,20.36 L37.68,20.43 L37.53,20.50 L37.37,20.56 L37.22,20.61 L37.06,20.67 L36.96,22.14 L34.04,22.14 L33.94,20.67 L33.78,20.61 L33.63,20.56 L33.47,20.50 L33.32,20.43 L33.17,20.36 L33.02,20.28 L31.91,21.26 L29.84,19.19 L30.82,18.08 L30.74,17.93 L30.67,17.78 L30.60,17.63 L30.54,17.47 L30.49,17.32 L30.43,17.16 L28.96,17.06 L28.96,14.14 L30.43,14.04 L30.49,13.88 L30.54,13.73 L30.60,13.57 L30.67,13.42 L30.74,13.27 L30.82,13.12 L29.84,12.01 L31.91,9.94 L33.02,10.92 L33.17,10.84 L33.32,10.77 L33.47,10.70 L33.63,10.64 L33.78,10.59 Z M37.7,15.6 A2.2,2.2 0 1 0 33.3,15.6 A2.2,2.2 0 1 0 37.7,15.6 Z"/><path fill-rule="evenodd" fill="#ececec" stroke="#ececec" stroke-width="0.6" stroke-linejoin="round" d="M33.94,28.93 L34.04,27.46 L36.96,27.46 L37.06,28.93 L37.22,28.99 L37.37,29.04 L37.53,29.10 L37.68,29.17 L37.83,29.24 L37.98,29.32 L39.09,28.34 L41.16,30.41 L40.18,31.52 L40.26,31.67 L40.33,31.82 L40.40,31.97 L40.46,32.13 L40.51,32.28 L40.57,32.44 L42.04,32.54 L42.04,35.46 L40.57,35.56 L40.51,35.72 L40.46,35.87 L40.40,36.03 L40.33,36.18 L40.26,36.33 L40.18,36.48 L41.16,37.59 L39.09,39.66 L37.98,38.68 L37.83,38.76 L37.68,38.83 L37.53,38.90 L37.37,38.96 L37.22,39.01 L37.06,39.07 L36.96,40.54 L34.04,40.54 L33.94,39.07 L33.78,39.01 L33.63,38.96 L33.47,38.90 L33.32,38.83 L33.17,38.76 L33.02,38.68 L31.91,39.66 L29.84,37.59 L30.82,36.48 L30.74,36.33 L30.67,36.18 L30.60,36.03 L30.54,35.87 L30.49,35.72 L30.43,35.56 L28.96,35.46 L28.96,32.54 L30.43,32.44 L30.49,32.28 L30.54,32.13 L30.60,31.97 L30.67,31.82 L30.74,31.67 L30.82,31.52 L29.84,30.41 L31.91,28.34 L33.02,29.32 L33.17,29.24 L33.32,29.17 L33.47,29.10 L33.63,29.04 L33.78,28.99 Z M37.7,34 A2.2,2.2 0 1 0 33.3,34 A2.2,2.2 0 1 0 37.7,34 Z"/></svg>
<svg style="position:absolute;left:2449.0px;top:713.0px;" width="25" height="25" viewBox="0 0 25 25"><circle cx="12.4" cy="12.8" r="11.7" fill="#ececec"/><polyline points="5.6,12.6 10.2,17 18.6,8.6" fill="none" stroke="#4a8146" stroke-width="3.3"/></svg>
<svg style="position:absolute;left:1767.8px;top:136.8px;" width="32" height="32" viewBox="0 0 32 32"><g transform="translate(16,16) rotate(45) scale(1.0)"><path d="M6,-2 L6,6 A6,6 0 0 1 -6,6 L-6,-7 A4,4 0 0 1 2,-7 L2,6 A2,2 0 0 1 -2,6 L-2,-4" fill="none" stroke="#ececec" stroke-width="2.8" stroke-linecap="round"/></g></svg>
<svg style="position:absolute;left:2012.4px;top:136.5px;" width="32" height="32" viewBox="0 0 32 32"><g transform="translate(16,16) rotate(45) scale(1.0)"><path d="M6,-2 L6,6 A6,6 0 0 1 -6,6 L-6,-7 A4,4 0 0 1 2,-7 L2,6 A2,2 0 0 1 -2,6 L-2,-4" fill="none" stroke="#ececec" stroke-width="2.8" stroke-linecap="round"/></g></svg>
<svg style="position:absolute;left:327.0px;top:571.0px;" width="34" height="22" viewBox="0 0 34 22"><g fill="none" stroke="#ececec" stroke-width="2.2"><circle cx="7.9" cy="14.2" r="5.6"/><circle cx="25.9" cy="14.2" r="5.6"/><polyline points="7.9,14.2 13,5 22,5 25.9,14.2"/><polyline points="13,5 17.5,14.2 22,5"/><line x1="9" y1="3" x2="15" y2="3"/><line x1="19.5" y1="2" x2="24" y2="2"/></g></svg>
<svg style="position:absolute;left:1797.0px;top:568.0px;" width="24" height="27" viewBox="0 0 24 27"><polygon points="2.2,2.5 21.2,13.9 2.2,25.3" fill="#ececec" stroke="#ececec" stroke-width="2.6" stroke-linejoin="round"/></svg>
<svg style="position:absolute;left:546.0px;top:922.0px;" width="21" height="27" viewBox="0 0 21 27"><path d="M2.2,3.2 Q2.2,2.2 3.2,2.2 L12.5,2.2 L18,7.7 L18,23.8 Q18,24.8 17,24.8 L3.2,24.8 Q2.2,24.8 2.2,23.8 Z" fill="none" stroke="#ececec" stroke-width="2.1" stroke-linejoin="round"/><path d="M12,2.2 L12,8.2 L18,8.2" fill="none" stroke="#ececec" stroke-width="2"/></svg>
<svg style="position:absolute;left:639.0px;top:921.0px;" width="28" height="28" viewBox="0 0 28 28"><g fill="#ececec"><circle cx="19.5" cy="10.2" r="8.2"/><polygon points="12,11 17.5,16.5 12.5,21.5 10.5,21.5 10.5,23.5 8.5,23.5 8.5,25.5 6,26.3 2.5,26.3 2.5,21"/></g><circle cx="20.6" cy="7.9" r="2.6" fill="#4470a5"/></svg>
<svg style="position:absolute;left:900.3px;top:79.6px;" width="20" height="20" viewBox="0 0 20 20"><path d="M3.6,3.6 L16.4,16.4 M3.6,16.4 L16.4,3.6" stroke="#ececec" stroke-width="4" stroke-linecap="round"/></svg>
<svg style="position:absolute;left:563.3px;top:571.2px;" width="20" height="20" viewBox="0 0 20 20"><path d="M3.6,3.6 L16.4,16.4 M3.6,16.4 L16.4,3.6" stroke="#ececec" stroke-width="4" stroke-linecap="round"/></svg>
<svg style="position:absolute;left:2095.5px;top:571.2px;" width="20" height="20" viewBox="0 0 20 20"><path d="M3.6,3.6 L16.4,16.4 M3.6,16.4 L16.4,3.6" stroke="#ececec" stroke-width="4" stroke-linecap="round"/></svg>
<svg style="position:absolute;left:1164.0px;top:1131.0px;" width="20" height="20" viewBox="0 0 20 20"><path d="M3.8,14.9 L16.2,3 M11,16.2 L17.3,10.3" stroke="#111" stroke-width="1.3" transform="translate(-0.8,-0.8)"/><path d="M3.8,14.9 L16.2,3 M11,16.2 L17.3,10.3" stroke="#aaa" stroke-width="1.3"/></svg>
<div style="position:absolute;left:0.0px;top:1336.0px;width:2674.0px;height:12.0px;background:#212121;border-radius:0px;"></div>
</body></html>
